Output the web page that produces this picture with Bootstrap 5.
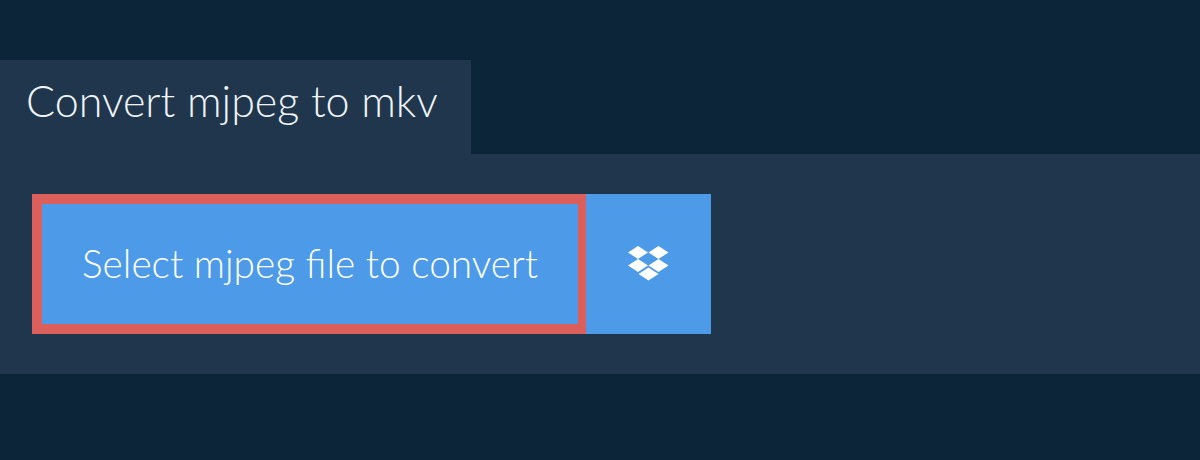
<!DOCTYPE html>
<html lang="en"><head><meta charset="utf-8"><title>Convert mjpeg to mkv</title>
<link href="https://cdn.jsdelivr.net/npm/bootstrap@5.3.0/dist/css/bootstrap.min.css" rel="stylesheet">
<style>
html,body{height:100%;}
body.pg{background:#0d2539;font-family:Lato,"Liberation Sans",sans-serif;font-weight:300;color:#f0f4f8;padding-top:60px;margin:0;}
.tabtitle{display:block;background:#1f364d;font-size:43px;font-weight:300;line-height:50px;padding:16px 0 28px 26px;margin:0;height:94px;width:471px;white-space:nowrap;}
.panel{background:#1f364d;padding:40px 32px;height:220px;}
.pick{background:#4c9ae8;color:#fff;border:10px solid #dc5f5c;border-right-width:8px;border-radius:0;font-size:38.800px;font-weight:300;width:554px;height:140px;padding:0 0 1px;white-space:nowrap;}
.drop{background:#4c9ae8;border:0;border-radius:0;width:125px;height:140px;padding:0 1px 1px 0;}
</style></head>
<body class="pg">
<h1 class="tabtitle">Convert mjpeg to mkv</h1>
<div class="panel d-flex">
<button type="button" class="btn pick">Select mjpeg file to convert</button>
<button type="button" class="btn drop d-flex align-items-center justify-content-center" aria-label="Dropbox">
<svg width="41" height="35" viewBox="0 0 41 35"><path fill="#fff" d="M10 0 0 6.500 10 13l10-6.500zM30.500 0l-10 6.500 10 6.500 10-6.500zM0 19.500 10 26l10-6.500L10 13zM30.500 13l-10 6.500 10 6.500 10-6.500zM20.500 21.500l-10 6.500 10 6.500 10-6.500z"/></svg>
</button>
</div>
<script src="https://cdn.jsdelivr.net/npm/bootstrap@5.3.0/dist/js/bootstrap.bundle.min.js"></script>
</body></html>
